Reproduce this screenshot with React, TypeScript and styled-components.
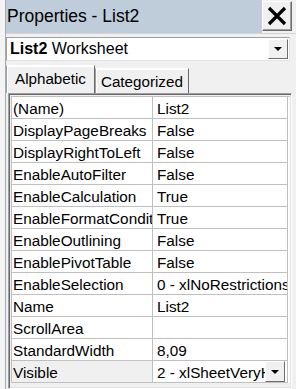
import React from 'react'
import styled, { createGlobalStyle } from 'styled-components'

interface Prop {
    name: string;
    value: string;
    selected?: boolean;
}

const props: Prop[] = [
    { name: '(Name)', value: 'List2' },
    { name: 'DisplayPageBreaks', value: 'False' },
    { name: 'DisplayRightToLeft', value: 'False' },
    { name: 'EnableAutoFilter', value: 'False' },
    { name: 'EnableCalculation', value: 'True' },
    { name: 'EnableFormatConditionsCalculation', value: 'True' },
    { name: 'EnableOutlining', value: 'False' },
    { name: 'EnablePivotTable', value: 'False' },
    { name: 'EnableSelection', value: '0 - xlNoRestrictions' },
    { name: 'Name', value: 'List2' },
    { name: 'ScrollArea', value: '' },
    { name: 'StandardWidth', value: '8,09' },
    { name: 'Visible', value: '2 - xlSheetVeryHidden', selected: true },
]

export default function App() {
    return (
        <>
            <GlobalStyle />
            <Page>
                <SheetEdge />
                <Window>
                    <TitleRow>
                        <Caption>Properties - List2</Caption>
                        <CloseButton type="button">
                            <svg width="20" height="20" viewBox="0 0 20 20">
                                <path d="M2 2 L18 18 M18 2 L2 18" stroke="#000" strokeWidth="3.2" />
                            </svg>
                        </CloseButton>
                    </TitleRow>
                    <Combo>
                        <ComboText><strong>List2</strong> Worksheet</ComboText>
                        <DropButton type="button"><Arrow /></DropButton>
                    </Combo>
                    <TabStrip>
                        <Tab $active>Alphabetic</Tab>
                        <Tab>Categorized</Tab>
                    </TabStrip>
                    <GridFrame>
                        <Grid>
                            {props.map((p) => (
                                <React.Fragment key={p.name}>
                                    <NameCell $selected={p.selected}><span>{p.name}</span></NameCell>
                                    <ValueCell>
                                        <span>{p.value}</span>
                                        {p.selected && <CellDrop type="button"><Arrow /></CellDrop>}
                                    </ValueCell>
                                </React.Fragment>
                            ))}
                        </Grid>
                    </GridFrame>
                </Window>
            </Page>
        </>
    )
}

const GlobalStyle = createGlobalStyle`
    html, body {
        margin: 0;
        padding: 0;
        background: #f0f0f0;
        font-family: "Liberation Sans", Arial, sans-serif;
    }
`

const Page = styled.div`
    display: flex;
    width: 296px;
    height: 389px;
    overflow: hidden;
    background: #f0f0f0;
`

const SheetEdge = styled.div`
    width: 5px;
    flex: none;
    background: #f4f4f4;
    border-right: 1px solid #a3acb8;
`

const Window = styled.div`
    flex: 1;
    display: flex;
    flex-direction: column;
    min-width: 0;
    background: #f0f0f0;
`

const TitleRow = styled.div`
    display: flex;
    height: 33px;
    flex: none;
    border-bottom: 1px solid #d4d4d4;
`

const Caption = styled.div`
    flex: 1;
    background: #bfcddb;
    font-size: 17.5px;
    line-height: 33px;
    padding-left: 1px;
    color: #000;
`

const CloseButton = styled.button`
    display: flex;
    align-items: center;
    justify-content: center;
    width: 30px;
    height: 30px;
    margin: 1px 4px 0 0;
    padding: 0;
    background: #f0f0f0;
    border: 1px solid;
    border-color: #fff #6d6d6d #6d6d6d #fff;
    box-shadow: inset -1px -1px 0 #a0a0a0;
`

const Combo = styled.div`
    display: flex;
    align-items: center;
    height: 24px;
    margin: 3px 6px 0 0;
    background: #fff;
    border: 1px solid #a0a0a0;
    border-right-color: #e3e3e3;
    border-bottom-color: #e3e3e3;
    box-sizing: border-box;
`

const ComboText = styled.div`
    flex: 1;
    padding-left: 3px;
    font-size: 16px;
    color: #000;
    strong { font-weight: bold; }
`

const DropButton = styled.button`
    display: flex;
    align-items: center;
    justify-content: center;
    width: 20px;
    height: 20px;
    margin-right: 1px;
    padding: 0;
    background: #f0f0f0;
    border: 1px solid;
    border-color: #fff #6d6d6d #6d6d6d #fff;
`

const Arrow = styled.i`
    display: block;
    width: 0;
    height: 0;
    border-left: 4px solid transparent;
    border-right: 4px solid transparent;
    border-top: 4px solid #000;
`

const TabStrip = styled.div`
    display: flex;
    align-items: flex-end;
    height: 32px;
    flex: none;
`

const Tab = styled.div<{ $active?: boolean }>`
    box-sizing: border-box;
    height: ${(p) => (p.$active ? '28px' : '25px')};
    padding: 0 ${(p) => (p.$active ? '8px' : '5px')};
    font-size: 15.2px;
    line-height: ${(p) => (p.$active ? '26px' : '25px')};
    color: #000;
    background: #f0f0f0;
    border: 1px solid;
    border-color: #fff #696969 transparent #a0a0a0;
    border-bottom: none;
    box-shadow: inset 1px 1px 0 #fff;
`

const GridFrame = styled.div`
    flex: 1;
    margin: 0 4px 0 2px;
    padding: 1px;
    border: 1px solid;
    border-color: #a0a0a0 #fff #fff #a0a0a0;
    box-shadow: inset 1px 1px 0 #696969, inset -1px -1px 0 #e3e3e3;
    background: #f0f0f0;
    min-height: 0;
`

const Grid = styled.div`
    display: grid;
    grid-template-columns: 141px 135px;
    grid-auto-rows: 22px;
    margin: 1px 0 0 1px;
    border-top: 1px solid #c0c0c0;
    border-left: 1px solid #c0c0c0;
    background: #fff;
`

const NameCell = styled.div<{ $selected?: boolean }>`
    box-sizing: border-box;
    display: flex;
    padding: 2px 0 0 1px;
    font-size: 15.3px;
    line-height: 19px;
    white-space: nowrap;
    overflow: hidden;
    color: #000;
    background: ${(p) => (p.$selected ? '#f0f0f0' : '#fff')};
    border-right: 1px solid #c0c0c0;
    border-bottom: 1px solid #c0c0c0;
    span {
        display: block;
        min-width: 0;
        overflow: hidden;
    }
`

const ValueCell = styled.div`
    box-sizing: border-box;
    display: flex;
    align-items: center;
    padding: 1px 0 0 4px;
    font-size: 15.3px;
    line-height: 19px;
    white-space: nowrap;
    overflow: hidden;
    color: #000;
    background: #fff;
    border-right: 1px solid #c0c0c0;
    border-bottom: 1px solid #c0c0c0;
    span {
        flex: 1;
        min-width: 0;
        overflow: hidden;
    }
`

const CellDrop = styled.button`
    display: flex;
    align-items: center;
    justify-content: center;
    flex: none;
    align-self: flex-start;
    width: 20px;
    height: 21px;
    margin: -1px 2px 0 0;
    padding: 0;
    background: #f0f0f0;
    border: 1px solid;
    border-color: #fff #6d6d6d #6d6d6d #fff;
`
